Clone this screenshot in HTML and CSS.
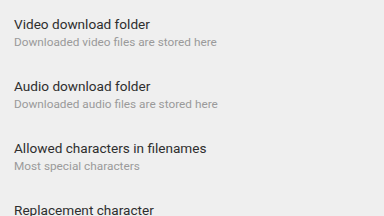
FILE: index.html
```html
<!DOCTYPE html>
<html lang="en">
<head>
    <meta charset="UTF-8">
    <meta name="viewport" content="width=device-width, initial-scale=1.0">
    <title>Settings</title>
    <link rel="stylesheet" href="styles.css">
</head>
<body>
    <div class="pref-list">
        <div class="pref-item">
            <div class="pref-title">Video download folder</div>
            <div class="pref-summary">Downloaded video files are stored here</div>
        </div>
        <div class="pref-item">
            <div class="pref-title">Audio download folder</div>
            <div class="pref-summary">Downloaded audio files are stored here</div>
        </div>
        <div class="pref-item">
            <div class="pref-title">Allowed characters in filenames</div>
            <div class="pref-summary">Most special characters</div>
        </div>
        <div class="pref-item">
            <div class="pref-title">Replacement character</div>
            <div class="pref-summary">_</div>
        </div>
    </div>
</body>
</html>
```

FILE: styles.css
```css
body {
    margin: 0;
    background-color: #efefef;
    font-family: 'Roboto', sans-serif;
    overflow: hidden;
}

.pref-list {
    display: flex;
    flex-direction: column;
}

.pref-item {
    height: 62px;
    box-sizing: border-box;
    padding: 16px 14px 0 14px;
}

.pref-title {
    font-size: 13.6px;
    line-height: 16px;
    color: #2e2e2e;
}

.pref-summary {
    font-size: 11.8px;
    line-height: 14px;
    color: #9a9a9a;
    margin-top: 2.5px;
}
```
